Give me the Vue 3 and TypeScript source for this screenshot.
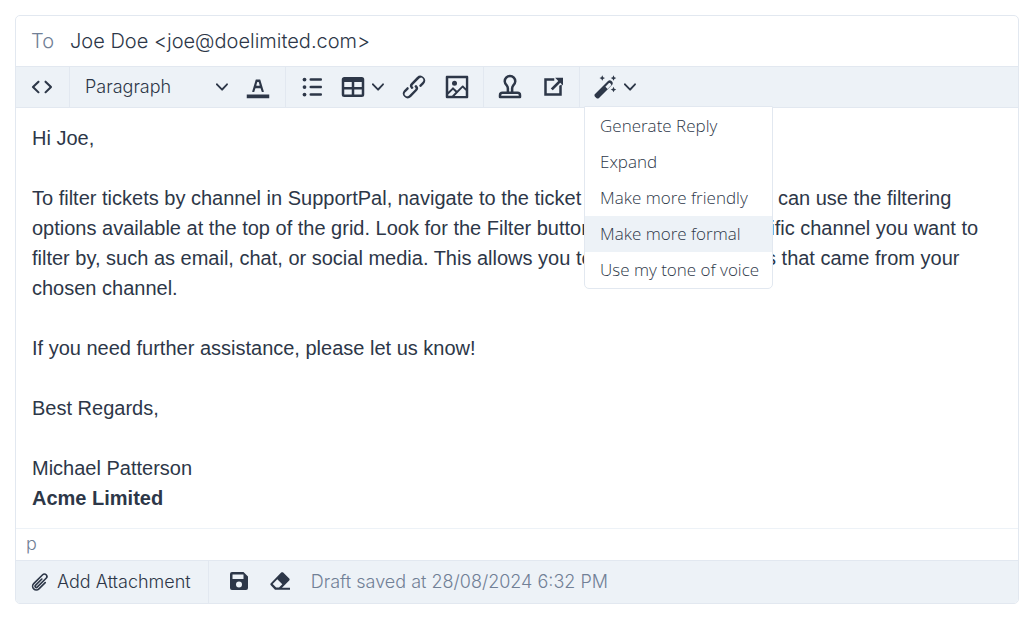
<script setup lang="ts">
import { ref } from 'vue'

const recipient = ref('Joe Doe <joe@doelimited.com>')
const block = ref('Paragraph')
const active = ref('Make more formal')
const actions: string[] = [
  'Generate Reply',
  'Expand',
  'Make more friendly',
  'Make more formal',
  'Use my tone of voice',
]
</script>

<template>
  <main class="composer">
    <div class="to-row">
      <label for="to">To</label>
      <input id="to" v-model="recipient" type="text" />
    </div>

    <div class="toolbar" role="toolbar" aria-label="Formatting">
      <div class="group source">
        <button type="button" aria-label="Source code">
          <svg class="icon" viewBox="0 0 24 24"><path d="M9.8 15.7c.3.3.3.8 0 1-.3.4-.9.4-1.2 0l-4.4-4.1a.8.8 0 0 1 0-1.2l4.4-4.2c.3-.3.9-.3 1.2 0 .3.3.3.8 0 1.1L6 12l3.8 3.7ZM14.2 15.7c-.3.3-.3.8 0 1 .4.4.9.4 1.2 0l4.4-4.1c.3-.3.3-.8 0-1.2l-4.4-4.2a.8.8 0 0 0-1.2 0c-.3.3-.3.8 0 1.1L18 12l-3.8 3.7Z" /></svg>
        </button>
      </div>
      <div class="group text">
        <div class="block-select">
          <select v-model="block" aria-label="Block format">
            <option>Paragraph</option>
          </select>
          <svg class="chevron" viewBox="0 0 10 10"><path d="M8.7 2.2c.3-.3.8-.3 1 0 .4.4.4.9 0 1.2L5.7 7.8c-.3.3-.9.3-1.2 0L.2 3.4a.8.8 0 0 1 0-1.2c.3-.3.8-.3 1.1 0L5 6l3.7-3.8Z" /></svg>
        </div>
        <button type="button" aria-label="Text color">
          <svg class="icon" viewBox="0 0 24 24"><path d="M3 18h18v3H3z" /><path d="M8.7 16h-.8a.5.5 0 0 1-.5-.6l2.7-9c.1-.3.3-.4.5-.4h2.8c.2 0 .4.1.5.4l2.7 9a.5.5 0 0 1-.5.6h-.8a.5.5 0 0 1-.4-.4l-.7-2.2c0-.3-.3-.4-.5-.4h-3.4c-.2 0-.4.1-.5.4l-.7 2.2c0 .3-.2.4-.4.4Zm2.6-7.6-.6 2a.5.5 0 0 0 .5.6h1.6a.5.5 0 0 0 .5-.6l-.6-2c0-.3-.3-.4-.5-.4h-.4c-.2 0-.4.1-.5.4Z" /></svg>
        </button>
      </div>
      <div class="group">
        <button type="button" aria-label="Bullet list">
          <svg class="icon" viewBox="0 0 24 24"><path d="M11 5h8c.6 0 1 .4 1 1s-.4 1-1 1h-8a1 1 0 0 1 0-2Zm0 6h8c.6 0 1 .4 1 1s-.4 1-1 1h-8a1 1 0 0 1 0-2Zm0 6h8c.6 0 1 .4 1 1s-.4 1-1 1h-8a1 1 0 0 1 0-2Z" /><circle cx="6" cy="6" r="1.5" /><circle cx="6" cy="12" r="1.5" /><circle cx="6" cy="18" r="1.5" /></svg>
        </button>
        <button type="button" class="split table" aria-label="Table">
          <svg class="icon" viewBox="0 0 24 24"><path fill-rule="evenodd" d="M19 4a2 2 0 0 1 2 2v12a2 2 0 0 1-2 2H5a2 2 0 0 1-2-2V6c0-1.1.9-2 2-2h14ZM5 14v4h6v-4H5Zm14 0h-6v4h6v-4Zm0-6h-6v4h6V8ZM5 12h6V8H5v4Z" /></svg>
          <svg class="chevron" viewBox="0 0 10 10"><path d="M8.7 2.2c.3-.3.8-.3 1 0 .4.4.4.9 0 1.2L5.7 7.8c-.3.3-.9.3-1.2 0L.2 3.4a.8.8 0 0 1 0-1.2c.3-.3.8-.3 1.1 0L5 6l3.7-3.8Z" /></svg>
        </button>
        <button type="button" aria-label="Link">
          <svg class="icon" viewBox="0 0 24 24"><path d="M6.2 12.3a1 1 0 0 1 1.4 1.4l-2 2a2 2 0 1 0 2.6 2.8l4.8-4.8a1 1 0 0 0 0-1.4 1 1 0 1 1 1.4-1.3 2.9 2.9 0 0 1 0 4L9.6 20a3.9 3.9 0 0 1-5.5-5.5l2-2Zm11.6-.6a1 1 0 0 1-1.4-1.4l2-2a2 2 0 1 0-2.6-2.8L11 10.3a1 1 0 0 0 0 1.4A1 1 0 1 1 9.6 13a2.9 2.9 0 0 1 0-4L14.4 4a3.9 3.9 0 0 1 5.5 5.5l-2 2Z" /></svg>
        </button>
        <button type="button" aria-label="Image">
          <svg class="icon" viewBox="0 0 24 24"><path fill-rule="evenodd" d="m5 15.7 3.3-3.2c.3-.3.7-.3 1 0L12 15l4.1-4c.3-.4.8-.4 1 0l2 1.9V5H5v10.7ZM5 18V19h3l2.8-2.9-2-2L5 17.9Zm14-3-2.5-2.4-6.4 6.5H19v-4ZM4 3h16c.6 0 1 .4 1 1v16c0 .6-.4 1-1 1H4a1 1 0 0 1-1-1V4c0-.6.4-1 1-1Z" /><circle cx="10" cy="9" r="2" /></svg>
        </button>
      </div>
      <div class="group">
        <button type="button" aria-label="Macro">
          <svg class="icon line" viewBox="0 0 24 24"><path d="M10.3 16.5v-3.4c0-1.1-.4-1.7-1-2.5a4.2 4.2 0 1 1 5.4 0c-.6.8-1 1.4-1 2.5v3.4" /><path d="M4 20v-1.5c0-1.1.9-2 2-2h12a2 2 0 0 1 2 2V20Z" /></svg>
        </button>
        <button type="button" aria-label="Open in new window">
          <svg class="icon" viewBox="0 0 24 24"><path d="M13 5v2H7v10h10v-6l2-1v9H5V5h8Z" /><path d="M13.7 4.5H20v6.3l-2.2-2.2-6 6-1.6-1.5 6-6Z" /></svg>
        </button>
      </div>
      <div class="group menu-anchor">
        <button type="button" class="split" aria-label="AI writing tools" aria-expanded="true">
          <svg class="icon" viewBox="0 0 24 24"><path fill-rule="evenodd" d="m3.2 17.6 10.4-10.4c.8-.8 2-.8 2.8 0l.4.4c.8.8.8 2 0 2.8L6.4 20.8c-.6.6-1.5.6-2.1 0l-1.1-1.1c-.6-.6-.6-1.5 0-2.1Zm8.3-5.9 1.8 1.8 2.5-2.5c.5-.5.5-1.1.1-1.5l-.4-.4c-.4-.4-1-.4-1.5.1Z" /><path d="m9 2.6.7 1.5 1.5.7-1.5.7L9 7l-.7-1.5-1.5-.7 1.5-.7ZM18 2.6l.7 1.5 1.5.7-1.5.7L18 7l-.7-1.5-1.5-.7 1.5-.7ZM18 11.8l.7 1.5 1.5.7-1.5.7-.7 1.5-.7-1.5-1.5-.7 1.5-.7Z" /></svg>
          <svg class="chevron" viewBox="0 0 10 10"><path d="M8.7 2.2c.3-.3.8-.3 1 0 .4.4.4.9 0 1.2L5.7 7.8c-.3.3-.9.3-1.2 0L.2 3.4a.8.8 0 0 1 0-1.2c.3-.3.8-.3 1.1 0L5 6l3.7-3.8Z" /></svg>
        </button>
        <div class="menu" role="menu">
          <button
            v-for="action in actions"
            :key="action"
            type="button"
            role="menuitem"
            :class="{ active: action === active }"
            @mouseenter="active = action"
          >{{ action }}</button>
        </div>
      </div>
    </div>

    <article class="message">
      <p>Hi Joe,</p>
      <p>To filter tickets by channel in SupportPal, navigate to the ticket grid. From there, you can use the filtering options available at the top of the grid. Look for the Filter button and select the specific channel you want to filter by, such as email, chat, or social media. This allows you to view only the tickets that came from your chosen channel.</p>
      <p>If you need further assistance, please let us know!</p>
      <p>Best Regards,</p>
      <p>Michael Patterson<br /><strong>Acme Limited</strong></p>
    </article>

    <div class="path">p</div>

    <footer class="footer">
      <button type="button" class="attach">
        <svg class="clip" viewBox="1 1 22 22"><path d="m18.375 12.739-7.693 7.693a4.5 4.5 0 0 1-6.364-6.364l10.94-10.94A3 3 0 1 1 19.5 7.372L8.552 18.32m5.698-9.941-7.81 7.81a1.5 1.5 0 0 0 2.112 2.13" /></svg>
        Add Attachment
      </button>
      <div class="draft">
        <button type="button" aria-label="Save draft">
          <svg class="small" viewBox="0 0 20 20"><path fill-rule="evenodd" d="M3 0h11.5L19 4.5V16a2 2 0 0 1-2 2H3a2 2 0 0 1-2-2V2a2 2 0 0 1 2-2Zm.5 2.5V7h11V2.5Zm6.5 7a3 3 0 1 0 0 6 3 3 0 0 0 0-6Z" /></svg>
        </button>
        <button type="button" aria-label="Discard draft">
          <svg class="small" viewBox="0 0 20 20"><path fill-rule="evenodd" d="M11.2.6c.6-.6 1.4-.6 2 0l6 6c.6.6.6 1.4 0 2L12 15.8h8v2H5L.8 13.2c-.6-.6-.6-1.4 0-2ZM7.3 7.3 2.7 12l3.5 3.6h2.8l3.3-3.4Z" /></svg>
        </button>
        <span>Draft saved at 28/08/2024 6:32 PM</span>
      </div>
    </footer>
  </main>
</template>

<style>
body {
  margin: 0;
  background: #fff;
}
</style>

<style scoped>
* {
  box-sizing: border-box;
}
.composer {
  margin: 15px 16px 16px 15px;
  border: 1px solid #e2e8f0;
  border-radius: 5px;
  color: #2d3748;
  font: 300 18px/30px Inter, "Liberation Sans", sans-serif;
}
button,
input,
select {
  border: 0;
  margin: 0;
  padding: 0;
  background: none;
  color: inherit;
  font: inherit;
}
button {
  display: flex;
  align-items: center;
  cursor: pointer;
}
svg {
  display: block;
  flex: none;
  fill: currentColor;
}
.to-row {
  display: flex;
  align-items: center;
  gap: 16px;
  height: 50px;
  padding: 0 15px;
  font-size: 20px;
}
.to-row label,
.path,
.draft span {
  color: #718096;
}
.to-row input {
  flex: 1;
  outline: 0;
}
.toolbar {
  display: flex;
  height: 42px;
  border-top: 1px solid #e2e8f0;
  border-bottom: 1px solid #e2e8f0;
  background: #edf2f7;
}
.group {
  display: flex;
  align-items: center;
  gap: 13px;
  padding: 0 11px;
  border-right: 1px solid #e2e8f0;
}
.source {
  padding-right: 12px;
}
.text {
  gap: 15px;
  padding: 0 12px 0 15px;
}
.group:last-child {
  border-right: 0;
}
.icon {
  width: 30px;
  height: 30px;
}
.line {
  fill: none;
  stroke: currentColor;
  stroke-width: 2;
  stroke-linejoin: round;
}
.chevron {
  width: 12px;
  height: 12px;
}
.split {
  gap: 3px;
}
.table {
  gap: 4px;
  margin-left: -2px;
  padding-right: 2px;
}
.block-select {
  display: grid;
  align-items: center;
  width: 143px;
}
.block-select > * {
  grid-area: 1 / 1;
}
.block-select select {
  width: 100%;
  appearance: none;
}
.block-select .chevron {
  justify-self: end;
  pointer-events: none;
}
.menu-anchor {
  position: relative;
}
.menu {
  position: absolute;
  top: 39px;
  left: 4px;
  padding-top: 1px;
  border: 1px solid #e2e8f0;
  border-radius: 0 0 5px 5px;
  background: #fff;
  overflow: hidden;
}
.menu button {
  width: 100%;
  height: 36px;
  padding: 0 13px 0 15px;
  font: 300 17px/36px "Open Sans", "Noto Sans", sans-serif;
  color: #2d3748;
  white-space: nowrap;
}
.menu .active {
  background: #edf2f7;
}
.message {
  padding: 15px 16px;
  font: 400 20px/30px "Liberation Sans", Arial, sans-serif;
}
.message p {
  margin: 0 0 30px;
}
.message p:last-child {
  margin: 0;
}
.path {
  height: 32px;
  padding: 0 10px;
  border-top: 1px solid #edf2f7;
}
.footer {
  display: flex;
  height: 43px;
  border-top: 1px solid #e2e8f0;
  border-radius: 0 0 4px 4px;
  background: #edf2f7;
}
.attach {
  gap: 8px;
  padding: 0 17px 0 15px;
  border-right: 1px solid #e2e8f0;
}
.clip {
  width: 18px;
  height: 18px;
  fill: none;
  stroke: currentColor;
  stroke-width: 2;
  stroke-linecap: round;
}
.draft {
  display: flex;
  align-items: center;
  gap: 21px;
  padding-left: 20px;
}
.small {
  width: 20px;
  height: 20px;
}
</style>
